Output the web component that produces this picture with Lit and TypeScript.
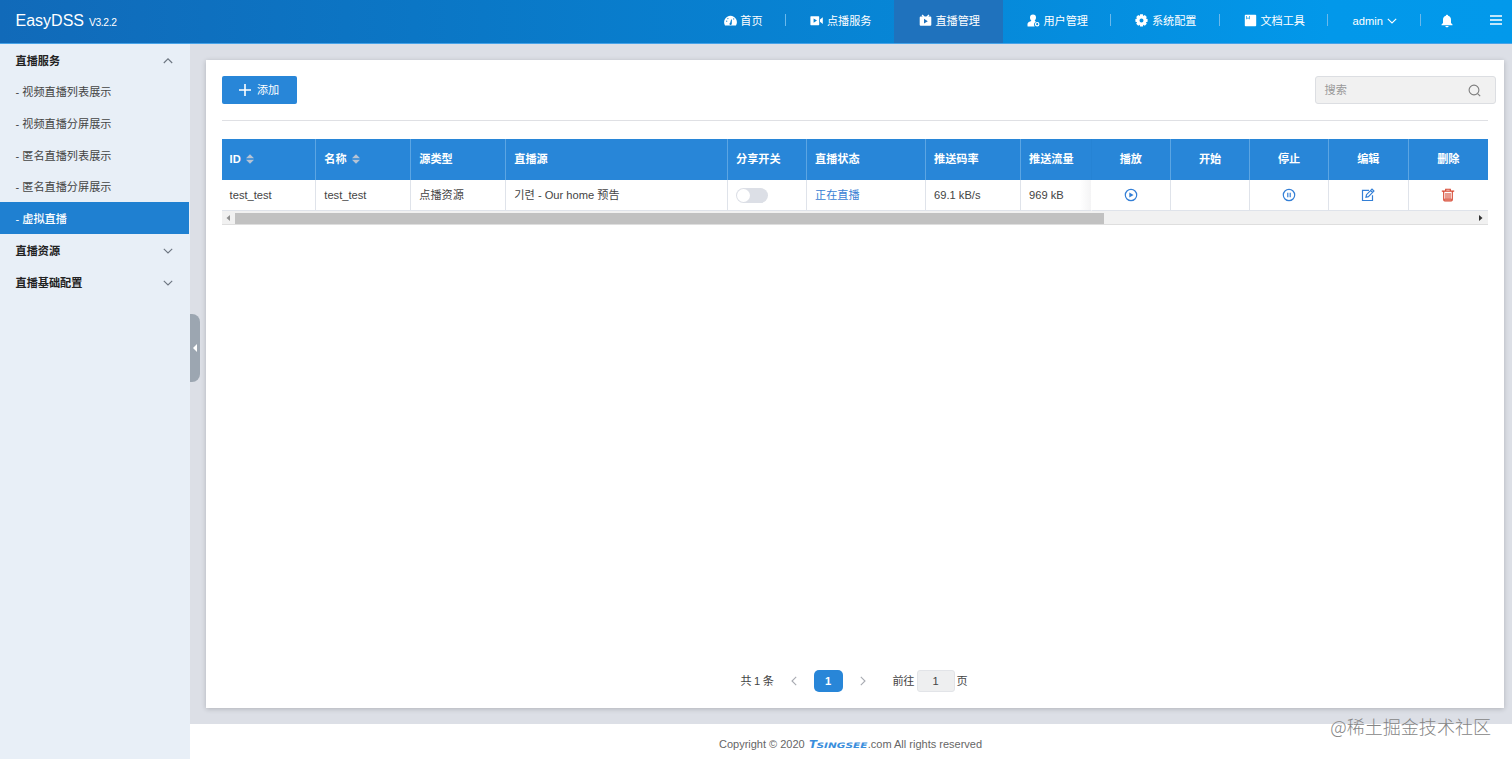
import { LitElement, html, svg, css, TemplateResult } from "lit";
import { customElement, property, state } from "lit/decorators.js";
import { classMap } from "lit/directives/class-map.js";

const chevronDown = html`<svg class="chev" viewBox="0 0 10 6" width="10" height="6"><path d="M.8 .8 5 5 9.2 .8" fill="none" stroke="currentColor" stroke-width="1.1"/></svg>`;
const chevronUp = html`<svg class="chev" viewBox="0 0 10 6" width="10" height="6"><path d="M.8 5 5 .8 9.2 5" fill="none" stroke="currentColor" stroke-width="1.1"/></svg>`;

const glyphs: Record<string, TemplateResult> = {
  home: svg`<path fill-rule="evenodd" fill="currentColor" d="M.9 11.3A6.4 6.4 0 1 1 12.1 11.3Q12 11.6 11.5 11.6H1.5Q1 11.6 .9 11.3ZM5.5 10.2a1.2 1.2 0 0 0 2.3-.5L7.9 5.5l-.8-.1-.9 3.4a1.3 1.3 0 0 0-.7 1.4ZM2.100 7.200a.6.6 0 1 0 1.200 0 .6.6 0 0 0-1.200 0ZM3.300 4.600a.6.6 0 1 0 1.200 0 .6.6 0 0 0-1.200 0ZM9.100 4.900a.6.6 0 1 0 1.200 0A.6.6 0 0 0 9.100 4.900Z"/>`,
  video: svg`<path fill-rule="evenodd" fill="currentColor" d="M1 2.2h7.6q.6 0 .6.6v7.800q0 .6-.6.6H1q-.6 0-.6-.6V2.800q0-.6.6-.6ZM3.600 4.400v4.400L7 6.600ZM10 5.600 12.800 3.300v6.800L10 7.800Z"/>`,
  live: svg`<path fill-rule="evenodd" fill="currentColor" d="M3.5.5 5.7 2.6h1.7L9.6.5l.9.9-1.2 1.2h2q1 0 1 1v7.2q0 1-1 1H1.7q-1 0-1-1V3.6q0-1 1-1h2L2.6 1.4ZM5 4.800v4.800l3.800-2.400Z"/>`,
  user: svg`<path fill="currentColor" d="M6 .4a3 3 0 0 1 3 3c0 1.300-.6 2.400-1.200 3v.7l1.200.6A3 3 0 0 0 7.700 12.400H.6c-.4-2.200 0-3.800 1.200-4.400l2.400-1V6.400C3.500 5.700 3 4.600 3 3.400A3 3 0 0 1 6 .4Z"/><circle cx="10.200" cy="10.200" r="1.700" fill="none" stroke="currentColor" stroke-width="1.200"/>`,
  gear: svg`<path fill-rule="evenodd" fill="currentColor" d="M5.100 .3h2.800l.4 1.700 1.500-.9 2 2-.9 1.500 1.700.4v2.800l-1.700.4.9 1.500-2 2-1.500-.9-.4 1.700H5.100l-.4-1.700-1.500.9-2-2 .9-1.500L.4 7.800V5l1.700-.4-.9-1.500 2-2 1.500.9ZM4.500 6.400a2 2 0 1 0 4 0 2 2 0 0 0-4 0Z"/>`,
  doc: svg`<path fill-rule="evenodd" fill="currentColor" d="M1.600.7h9.800q.8 0 .8.8v10q0 .8-.8.8H1.600q-.8 0-.8-.8v-10q0-.8.8-.8ZM2.300 2v3.200h.7V4.500h2v.7h.7V2H5v1.800H3V2Z"/>`,
  play: svg`<circle cx="7" cy="7" r="5.700" fill="none" stroke="currentColor" stroke-width="1.200"/><path d="M5.300 4.400v5.200L9.600 7Z" fill="currentColor"/>`,
  pause: svg`<circle cx="7" cy="7" r="5.700" fill="none" stroke="currentColor" stroke-width="1.200"/><path d="M5.800 4.700v4.600M8.200 4.700v4.600" stroke="currentColor" stroke-width="1.200"/>`,
  edit: svg`<path d="M8 2.300H1.500v10.200h10V7.300M5 9.200l.5-2.500L11 1.200l1.900 1.900-5.500 5.500ZM9.600 2.600l1.900 1.900" fill="none" stroke="currentColor" stroke-width="1.200"/>`,
  trash: svg`<path d="M.8 3.100h12.400M4.700 2.900V1.200h4.600v1.700M2.700 3.200v8.600q0 1.100 1.100 1.100h6.400q1.100 0 1.100-1.100V3.200M5 5v6.200M7 5v6.200M9 5v6.200M3 11.300h8" fill="none" stroke="currentColor" stroke-width="1.100"/>`,
};
const icon = (name: string, size = 13) =>
  html`<svg class="icon" viewBox="0 0 ${size} ${size}" width=${size} height=${size}>${glyphs[name]}</svg>`;

@customElement("dss-header")
class DssHeader extends LitElement {
  @state() private active = "live";
  static styles = css`
    :host { display: block; flex: none; }
    .bar { box-sizing: border-box; height: 44px; display: flex; color: #fff; font-size: 11.150px;
      background: linear-gradient(90deg, #116ab9 0%, #0a78c7 32%, #0786d6 60%, #0298ea 88%, #0299eb 100%);
      border-bottom: 1px solid #47a3e8; }
    .brand { flex: 1; display: flex; align-items: baseline; padding: 11px 0 0 15.500px; line-height: 20px; gap: 5px; }
    .name { font-size: 16px; }
    .ver { font-size: 10.300px; letter-spacing: -.35px; }
    .item { box-sizing: border-box; width: 108.500px; height: 43px; padding: 0 0 2px 1.500px; display: flex; align-items: center; justify-content: center; gap: 3.500px; white-space: nowrap; }
    .home { width: 86.500px; padding-left: 2px; }
    .admin { width: 92.600px; gap: 4px; padding-left: 1px; }
    .bell { width: 51px; padding-left: 0; }
    .menu { width: 40px; padding: 0 0 3px 7px; }
    .line { border-right: 1px solid transparent; border-image: linear-gradient(transparent 14px, #6bb9ec 14px, #6bb9ec 26px, transparent 26px) 1; }
    .active { background: #1f72bd; }
    .chev { flex: none; }
    .icon { flex: none; }
  `;
  render() {
    const items = [
      ["home", "首页", true], ["video", "点播服务", false], ["live", "直播管理", false],
      ["user", "用户管理", true], ["gear", "系统配置", true], ["doc", "文档工具", true],
    ] as [string, string, boolean][];
    return html`<header class="bar">
      <div class="brand"><span class="name">EasyDSS</span><span class="ver">V3.2.2</span></div>
      ${items.map(([id, label, line]) => html`<div
        class=${classMap({ item: true, home: id === "home", line, active: this.active === id })}
        @click=${() => (this.active = id)}>${icon(id)}<span>${label}</span></div>`)}
      <div class="item admin line"><span>admin</span>${chevronDown}</div>
      <div class="item bell"><svg viewBox="0 0 12 14" width="12" height="14"><path fill="currentColor" d="M6 .8c.7 0 1.100.4 1.100 1 1.900.5 2.900 2 2.900 4v3.200l1.500 1.600v.6H.5v-.6L2 9V5.800c0-2 1-3.500 2.900-4 0-.6.4-1 1.100-1ZM4.300 11.900h3.400c-.2.900-.8 1.300-1.700 1.300s-1.500-.4-1.700-1.300Z"/></svg></div>
      <div class="item menu"><svg viewBox="0 0 12 10" width="12" height="10"><path d="M0 1h12M0 5h12M0 9h12" stroke="currentColor" stroke-width="1.500"/></svg></div>
    </header>`;
  }
}

@customElement("dss-sidebar")
class DssSidebar extends LitElement {
  @state() private current = "虚拟直播";
  static styles = css`
    :host { display: block; flex: none; width: 190px; background: #e8eff7; }
    .row { box-sizing: border-box; height: 31.700px; width: 189px; padding: 1.200px 16.500px 0 15.500px; display: flex; align-items: center; justify-content: space-between; font-size: 11.150px; color: #444; }
    .title { font-weight: 700; color: #222; padding-top: 2px; }
    .on { background: #1f80d1; color: #fff; font-weight: 500; }
    .chev { color: #6c7580; }
  `;
  render() {
    const subs = ["视频直播列表展示", "视频直播分屏展示", "匿名直播列表展示", "匿名直播分屏展示", "虚拟直播"];
    return html`<nav>
      <div class="row title"><span>直播服务</span>${chevronUp}</div>
      ${subs.map((s) => html`<div class=${classMap({ row: true, on: s === this.current })} @click=${() => (this.current = s)}><span>- ${s}</span></div>`)}
      <div class="row title"><span>直播资源</span>${chevronDown}</div>
      <div class="row title"><span>直播基础配置</span>${chevronDown}</div>
    </nav>`;
  }
}

@customElement("dss-table")
class DssTable extends LitElement {
  @property({ type: Boolean }) shared = false;
  static styles = css`
    :host { display: block; }
    .row { display: grid; grid-template-columns: 94.700px 95px 95px 221.800px 79px 119px 95px 70.500px 79.500px 79px 79px 79.500px 1fr; font-size: 11.150px; color: #444; }
    .cell { box-sizing: border-box; display: flex; align-items: center; padding: 0 8px; border-right: 1px solid #dfe3ea; height: 31.500px; white-space: nowrap; border-bottom: 1px solid #dfe3ea; }
    .head .cell { height: 40.500px; background: #2886d8; color: #fff; font-weight: 700; border-right-color: #5ba5e3; border-bottom: 0; padding-bottom: 1px; gap: 5px; }
    .cell.mid { justify-content: center; color: #337fd6; }
    .head .cell.mid { color: #fff; }
    .cell.seam { border-right-color: transparent; }
    .row:not(.head) .seam { background: linear-gradient(90deg, #fff 84%, #f4f4f5); }
    .head .cell.seam { border-right-color: #2683d4; }
    .cell:last-child { border-right: 0; }
    .cell.state { color: #3881d4; }
    .cell.red { color: #d6452f; }
    .switch { box-sizing: border-box; width: 32px; height: 15.500px; border-radius: 8px; background: #dcdfe6; padding: 1.200px; margin-top: 1px; }
    .knob { width: 13px; height: 13px; border-radius: 50%; background: #fff; }
    .switch.yes .knob { margin-left: auto; }
    .scroll { box-sizing: border-box; height: 14px; padding-top: 1px; background: #f1f1f1; display: flex; align-items: center; justify-content: space-between; border-bottom: 1px solid #dedede; }
    .arrow { width: 13.500px; display: flex; justify-content: center; }
    .thumb { width: 869px; height: 11px; background: #c1c1c1; margin-right: auto; }
  `;
  render() {
    const sort = html`<svg viewBox="0 0 8 10" width="8" height="10"><path d="M0 4.200 4 .2l4 4ZM0 5.800h8l-4 4Z" fill="#b7c4d4"/></svg>`;
    const left = ["ID", "名称", "源类型", "直播源", "分享开关", "直播状态", "推送码率", "推送流量"];
    const right = ["播放", "开始", "停止", "编辑", "删除"];
    return html`
      <div class="row head">
        ${left.map((t, i) => html`<div class=${classMap({ cell: true, seam: i === 7 })}>${t}${i < 2 ? sort : ""}</div>`)}
        ${right.map((t) => html`<div class="cell mid">${t}</div>`)}
      </div>
      <div class="row">
        <div class="cell">test_test</div>
        <div class="cell">test_test</div>
        <div class="cell">点播资源</div>
        <div class="cell">기련 - Our home 预告</div>
        <div class="cell"><div class=${classMap({ switch: true, yes: this.shared })} @click=${() => (this.shared = !this.shared)}><div class="knob"></div></div></div>
        <div class="cell state">正在直播</div>
        <div class="cell">69.1 kB/s</div>
        <div class="cell seam">969 kB</div>
        <div class="cell mid">${icon("play", 14)}</div>
        <div class="cell mid"></div>
        <div class="cell mid">${icon("pause", 14)}</div>
        <div class="cell mid">${icon("edit", 14)}</div>
        <div class="cell mid red">${icon("trash", 14)}</div>
      </div>
      <div class="scroll">
        <span class="arrow"><svg viewBox="0 0 4 6" width="4" height="6"><path d="M4 0v6L.5 3Z" fill="#8f8f8f"/></svg></span>
        <div class="thumb"></div>
        <span class="arrow"><svg viewBox="0 0 4 6" width="4" height="6"><path d="M0 0v6l3.500-3Z" fill="#333"/></svg></span>
      </div>`;
  }
}

@customElement("app-root")
class AppRoot extends LitElement {
  static styles = css`
    :host { display: flex; flex-direction: column; position: relative; width: 1512px; height: 759px; overflow: hidden; background: #fff;
      font-family: "Liberation Sans", "Noto Sans CJK SC", "Noto Sans CJK KR", sans-serif; font-size: 11.150px; line-height: 16px; color: #444; }
    .body { flex: 1; display: flex; min-height: 0; }
    .main { flex: 1; display: flex; flex-direction: column; min-width: 0; }
    .stage { box-sizing: border-box; height: 680px; background: #dcdfe6; padding: 16px 8.500px 16.500px 16px; }
    .card { box-sizing: border-box; height: 100%; background: #fff; padding: 15.500px 15.500px 16px 15.600px; display: flex; flex-direction: column; box-shadow: 0 1px 5px rgba(0,0,0,.2); }
    .tools { display: flex; justify-content: space-between; align-items: center; height: 29px; margin-right: -7.500px; }
    .add { box-sizing: border-box; width: 75px; height: 27.500px; background: #2886d8; border-radius: 2px; color: #fff; display: flex; align-items: center; justify-content: center; gap: 6px; }
    .search { box-sizing: border-box; width: 181px; height: 28.500px; border: 1px solid #dcdee2; border-radius: 3px; background: #f1f1f1; color: #999; display: flex; align-items: center; justify-content: space-between; padding: 0 14px 0 9px; }
    .rule { height: 1px; background: #dfe0e4; margin: 15.500px 0 18px; }
    .pages { margin-top: auto; height: 22px; display: flex; align-items: center; justify-content: center; padding-right: 1.500px; color: #444; white-space: nowrap; }
    .arrow { color: #a8abb2; width: 40px; display: flex; justify-content: center; }
    .total { letter-spacing: -.3px; }
    .on { width: 29px; height: 22px; line-height: 22px; border-radius: 5px; background: #2886d8; color: #fff; font-weight: 700; text-align: center; }
    .goto { padding-left: 10px; letter-spacing: -.4px; }
    .num { box-sizing: border-box; width: 38px; height: 22px; line-height: 21px; margin: 0 2px 0 2.500px; border: 1px solid #e2e4e8; border-radius: 3px; background: #eeeff0; text-align: center; }
    .footer { flex: 1; display: flex; align-items: center; justify-content: center; padding: 5px 1px 0 0; font-size: 11px; color: #666; }
    .logo { margin: 0 0 0 4px; }
    .handle { position: absolute; left: 190px; top: 314px; width: 10px; height: 68px; border-radius: 0 8px 8px 0; background: #9ca6b1; display: flex; align-items: center; justify-content: center; }
    .mark { position: absolute; right: 21px; top: 714px; font-size: 18.050px; line-height: 24px; color: #858585; font-weight: 300; font-family: "Noto Sans CJK SC", sans-serif; white-space: nowrap; }
  `;
  render() {
    return html`
      <dss-header></dss-header>
      <div class="body">
        <dss-sidebar></dss-sidebar>
        <div class="main">
          <div class="stage"><section class="card">
            <div class="tools">
              <div class="add"><svg viewBox="0 0 12 12" width="12" height="12"><path d="M6 0v12M0 6h12" stroke="#fff" stroke-width="1.600"/></svg><span>添加</span></div>
              <div class="search"><span>搜索</span><svg viewBox="0 0 13 13" width="13" height="13"><circle cx="6" cy="6" r="4.900" fill="none" stroke="#7d7d7d" stroke-width="1.100"/><path d="m9.600 9.600 2.600 2.600" stroke="#7d7d7d" stroke-width="1.100"/></svg></div>
            </div>
            <div class="rule"></div>
            <dss-table></dss-table>
            <div class="pages">
              <span class="total">共 1 条</span>
              <span class="arrow"><svg viewBox="0 0 6 10" width="6" height="10"><path d="M5.200.8 1 5l4.200 4.200" fill="none" stroke="currentColor" stroke-width="1.100"/></svg></span>
              <span class="on">1</span>
              <span class="arrow"><svg viewBox="0 0 6 10" width="6" height="10"><path d="M.8.8 5 5 .8 9.200" fill="none" stroke="currentColor" stroke-width="1.100"/></svg></span>
              <span class="goto">前往</span><span class="num">1</span><span>页</span>
            </div>
          </section></div>
          <footer class="footer"><span>Copyright © 2020</span>
            <svg class="logo" viewBox="0 0 59 10" width="59" height="10"><g fill="#3a8edc" font-family="DejaVu Sans" font-weight="700" font-style="italic"><text x="0" y="8.500" font-size="10" textLength="8" lengthAdjust="spacingAndGlyphs">T</text><text x="7.500" y="8.500" font-size="7.500" textLength="51" lengthAdjust="spacingAndGlyphs">SINGSEE</text></g></svg>
            <span>.com All rights reserved</span></footer>
        </div>
      </div>
      <div class="handle"><svg viewBox="0 0 4 8" width="4" height="8"><path d="M4 0v8L0 4Z" fill="#fff"/></svg></div>
      <div class="mark">@稀土掘金技术社区</div>`;
  }
}
